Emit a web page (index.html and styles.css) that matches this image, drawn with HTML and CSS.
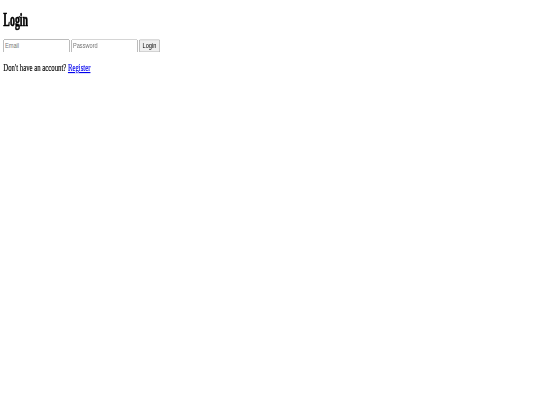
FILE: index.html
```html
<!DOCTYPE html>
<html lang="en">
<head>
<meta charset="utf-8">
<title>Login</title>
<link rel="stylesheet" href="styles.css">
</head>
<body>
<div class="viewport">
  <div class="page">
    <h1 class="title"><span class="narrow narrow-title">Login</span></h1>
    <form class="login-form">
      <input type="email" placeholder="Email">
      <input type="password" placeholder="Password">
      <button type="submit">Login</button>
    </form>
    <p class="register"><span class="narrow narrow-text">Don't have an account? <a href="#">Register</a></span></p>
  </div>
</div>
</body>
</html>
```

FILE: styles.css
```css
html, body {
  margin: 0;
  padding: 0;
  background: #ffffff;
}
.viewport {
  width: 540px;
  height: 405px;
  overflow: hidden;
}
.page {
  width: 1264px;
  height: 720px;
  padding: 0 8px;
  font-family: "Liberation Serif", "Times New Roman", serif;
  color: #000000;
  transform: scale(0.421875, 0.5625);
  transform-origin: 0 0;
}
.narrow {
  display: inline-block;
  transform-origin: 0 50%;
  white-space: nowrap;
}
.narrow-title {
  font-weight: 700;
  transform: scaleX(0.73);
  -webkit-text-stroke: 1.2px #000000;
}
.narrow-text {
  transform: scaleX(0.8);
  -webkit-text-stroke: 0.3px currentColor;
}
.title {
  font-size: 32px;
  margin: 0;
  padding-top: 17px;
  line-height: normal;
}
.login-form {
  margin: 16px 0 0;
}
.login-form input,
.login-form button {
  font-family: "Liberation Sans", Arial, sans-serif;
  font-size: 13.33px;
  height: 23px;
  box-sizing: border-box;
  vertical-align: top;
}
.login-form input {
  width: 157px;
}
.register {
  font-size: 20px;
  margin: 16px 0 0;
}
.register a {
  color: #0000ee;
}
```
